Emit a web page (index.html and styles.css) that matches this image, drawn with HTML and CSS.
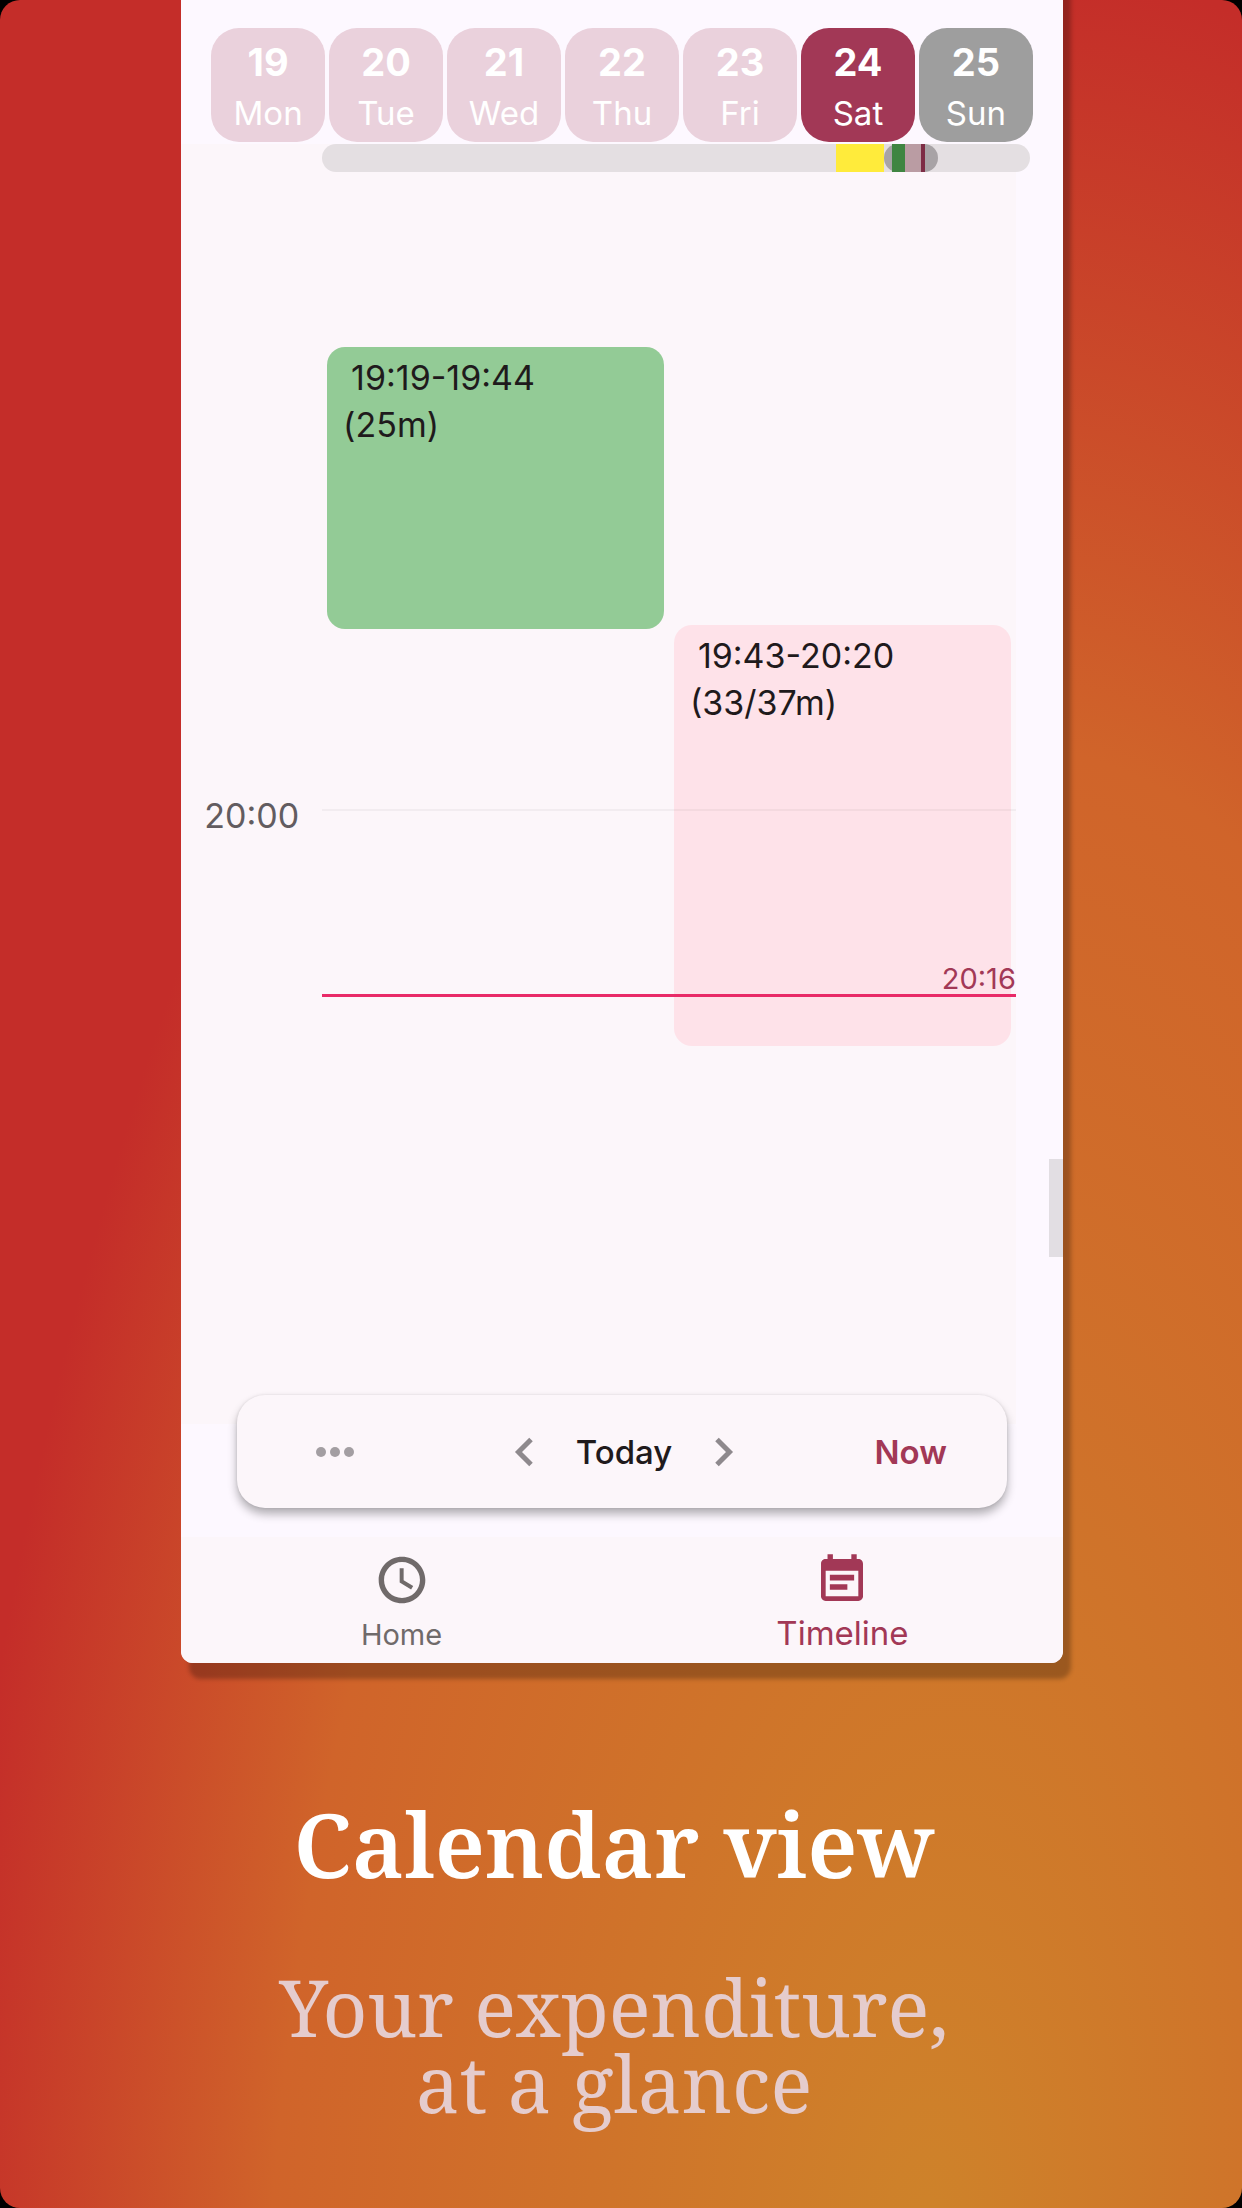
FILE: index.html
```html
<!DOCTYPE html>
<html lang="en">
<head>
<meta charset="utf-8">
<meta name="viewport" content="width=device-width, initial-scale=1">
<title>Calendar view</title>
<link rel="stylesheet" href="styles.css">
</head>
<body>
<div class="poster">
  <svg class="backdrop" viewBox="0 0 1242 2208" preserveAspectRatio="none" aria-hidden="true">
    <defs>
      <radialGradient id="glow" gradientUnits="userSpaceOnUse" cx="0" cy="0" r="1" gradientTransform="translate(925 2250) rotate(4) scale(990 2280)">
        <stop offset="0" stop-color="#ce832a"/>
        <stop offset="0.66" stop-color="#d0642a"/>
        <stop offset="1" stop-color="#c42d29"/>
      </radialGradient>
    </defs>
    <rect width="1242" height="2208" fill="url(#glow)"/>
  </svg>
  <main class="phone">
    <nav class="week" aria-label="Days">
      <button class="day"><b>19</b><span>Mon</span></button>
      <button class="day"><b>20</b><span>Tue</span></button>
      <button class="day"><b>21</b><span>Wed</span></button>
      <button class="day"><b>22</b><span>Thu</span></button>
      <button class="day"><b>23</b><span>Fri</span></button>
      <button class="day day-current" aria-current="date"><b>24</b><span>Sat</span></button>
      <button class="day day-future"><b>25</b><span>Sun</span></button>
    </nav>
    <section class="timeline">
      <div class="overview">
        <span class="mark mark-yellow"></span>
        <span class="mark mark-view"><i class="bit-green"></i><i class="bit-rose"></i><i class="bit-now"></i></span>
      </div>
      <span class="hour">20:00</span>
      <div class="track">
        <article class="event event-green"><p class="range">19:19-19:44</p><p>(25m)</p></article>
        <article class="event event-pink"><p class="range">19:43-20:20</p><p>(33/37m)</p></article>
        <div class="hour-line"></div>
        <div class="now"><span>20:16</span></div>
      </div>
      <div class="scroll-thumb"></div>
    </section>
    <div class="dock">
      <div class="toolbar">
        <button class="icon-button" aria-label="More"><svg width="40" height="12" viewBox="0 0 40 12"><g fill="#a39ea2"><circle cx="6" cy="6" r="5"/><circle cx="20" cy="6" r="5"/><circle cx="34" cy="6" r="5"/></g></svg></button>
        <div class="pager">
          <button class="icon-button" aria-label="Previous"><svg width="20" height="30" viewBox="0 0 20 30"><path d="M17 2.500 4.500 15 17 27.500" fill="none" stroke="#8e898d" stroke-width="5"/></svg></button>
          <button class="today">Today</button>
          <button class="icon-button" aria-label="Next"><svg width="20" height="30" viewBox="0 0 20 30"><path d="M3 2.500 15.500 15 3 27.500" fill="none" stroke="#8e898d" stroke-width="5"/></svg></button>
        </div>
        <button class="to-now">Now</button>
      </div>
    </div>
    <nav class="tabs" aria-label="Sections">
      <a class="tab" href="#home">
        <svg class="tab-icon" viewBox="0 0 24 24"><path fill="currentColor" d="M11.990 2C6.470 2 2 6.480 2 12s4.470 10 9.990 10C17.520 22 22 17.520 22 12S17.520 2 11.990 2zM12 19.700c-4.250 0-7.700-3.450-7.700-7.700S7.750 4.300 12 4.300s7.700 3.450 7.700 7.700-3.450 7.700-7.700 7.700zM12.700 7H11v6.100l4.900 2.950.9-1.450-4.100-2.450z"/></svg>
        <span>Home</span>
      </a>
      <a class="tab tab-active" href="#timeline" aria-current="page">
        <svg class="tab-icon" viewBox="0 0 24 24"><path fill="currentColor" d="M17.200 9.800H6.800v2.400h10.400v-2.400zM19 3h-.7V1h-2.300v2H8.100V1H5.800v2H5c-1.110 0-1.990.9-1.990 2L3 19c0 1.100.89 2 2 2h14c1.100 0 2-.9 2-2V5c0-1.100-.9-2-2-2zm0 16H5V8h14v11zm-4.700-5.200H6.800v2.400h7.500v-2.400z"/></svg>
        <span>Timeline</span>
      </a>
    </nav>
  </main>
  <footer class="caption">
    <h1>Calendar view</h1>
    <p>Your expenditure,<br>at a glance</p>
  </footer>
</div>
</body>
</html>
```
FILE: styles.css
```css
* { box-sizing: border-box; }
body { margin: 0; background: #000; font-family: Inter, "Liberation Sans", sans-serif; color: #1f1a1c; }
p, h1 { margin: 0; }
button { border: 0; padding: 0; background: none; font: inherit; color: inherit; }
svg { display: block; }

.poster { position: relative; min-height: 100vh; overflow: hidden; border-radius: 20px; display: flex; flex-direction: column; align-items: center; }
.backdrop { position: absolute; inset: 0; width: 100%; height: 100%; }

/* The phone runs off the top edge of the poster. */
.phone { position: relative; width: 71%; margin: -24px 0 0 2px; padding-top: 24px; background: #fdf8ff; border-radius: 0 0 12px 12px; box-shadow: 8px 16px 4px rgba(0, 0, 0, .25); }

.week { display: grid; grid-template-columns: repeat(7, 1fr); gap: 4px; padding: 28px 30px 2px; }
.day { height: 114px; padding-top: 5px; border-radius: 28px; background: #ead1dc; color: #fff; font-size: 33px; line-height: 51px; display: flex; flex-direction: column; align-items: center; justify-content: center; }
.day b { font-size: 38px; line-height: 51px; }
.day-current { background: #a23856; }
.day-future { background: #9e9e9e; }

.timeline { position: relative; height: 1280px; margin-right: 47px; background: #fcf6fa; display: grid; grid-template-columns: 141px 1fr; grid-template-rows: 28px 1fr; }
.overview { grid-column: 2; position: relative; margin-right: -14px; border-radius: 14px; background: #e4dfe2; }
.mark { position: absolute; top: 0; bottom: 0; }
.mark-yellow { right: 146px; width: 48px; background: #ffeb3b; }
.mark-view { right: 92px; width: 54px; border-radius: 14px; background: #a8a3a6; display: flex; padding-left: 8px; }
.bit-green { width: 13px; background: #3f8541; }
.bit-rose { width: 16px; background: #ba9ca3; }
.bit-now { width: 4px; background: #7d2c45; }
.hour { grid-column: 1; grid-row: 2; padding: 620px 23px 0 0; text-align: right; font-size: 34px; line-height: 48px; color: #625c60; }
.track { grid-column: 2; grid-row: 2; position: relative; }
.hour-line { position: absolute; left: 0; right: 0; top: 637px; height: 2px; background: rgba(0, 0, 0, .04); }
.event { position: absolute; width: 337px; padding: 7px 16px; border-radius: 18px; font-size: 34px; line-height: 47px; }
.range { padding-left: 8px; }
.event-green { left: 5px; top: 175px; height: 282px; background: #93cb96; }
.event-pink { right: 5px; top: 453px; height: 421px; background: #fee2e9; }
.now { position: absolute; left: 0; right: 0; top: 791px; border-bottom: 3px solid #e92a68; text-align: right; font-size: 29px; line-height: 32px; height: 34px; color: #a23856; }
.scroll-thumb { position: absolute; right: -47px; top: 1015px; width: 14px; height: 98px; background: #e2dee3; }

.dock { position: relative; margin-top: -29px; padding: 0 56px 29px; }
.toolbar { height: 113px; border-radius: 28px; background: #fcf6fa; box-shadow: 0 6px 10px rgba(0, 0, 0, .3), 0 0 3px rgba(0, 0, 0, .1); display: grid; grid-template-columns: 1fr auto 1fr; align-items: center; padding: 0 60px 0 78px; font-size: 33px; font-weight: 500; }
.pager { display: flex; align-items: center; gap: 42px; margin-right: 14px; }
.to-now { justify-self: end; color: #a23856; font-weight: 600; }

.tabs { display: grid; grid-template-columns: 1fr 1fr; height: 126px; background: #fcf6fa; border-radius: 0 0 12px 12px; }
.tab { display: flex; flex-direction: column; align-items: center; padding-top: 15px; font-size: 29px; line-height: 54px; color: #706a6a; text-decoration: none; }
.tab-active { font-size: 33px; line-height: 50px; color: #a23856; }
.tab-icon { width: 56px; height: 56px; }

.caption { position: relative; text-align: center; padding: 120px 14px 0 0; font-family: "Noto Serif", "Liberation Serif", serif; color: #fff; }
.caption h1 { font-size: 90px; line-height: 120px; font-weight: 600; }
.caption p { margin-top: 66px; font-size: 78px; line-height: 76px; color: #e5cccd; }
```
